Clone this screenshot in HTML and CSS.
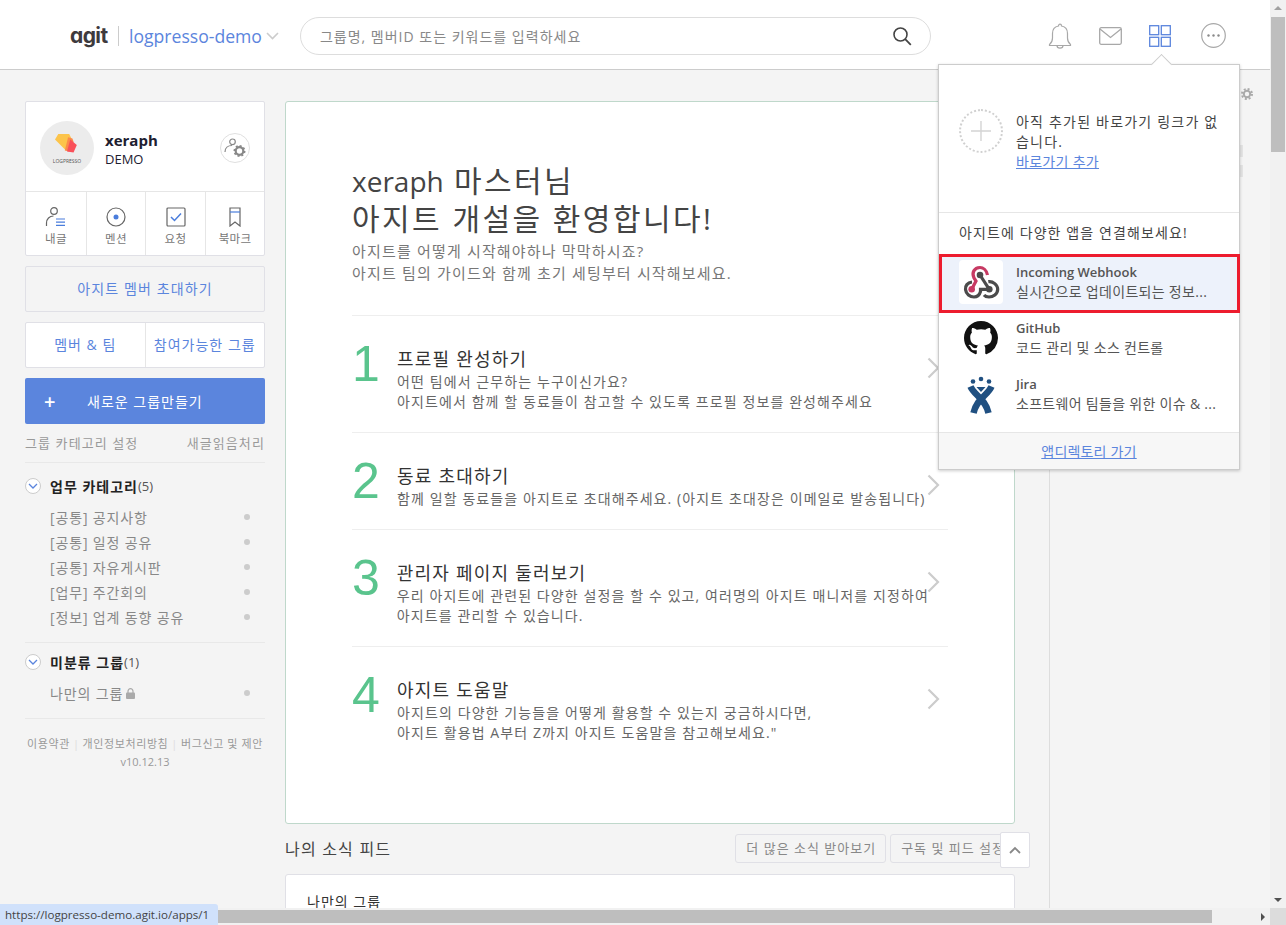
FILE: index.html
```html
<!DOCTYPE html>
<html lang="ko">
<head>
  <meta charset="UTF-8">
  <title>agit - logpresso-demo</title>
  <link rel="stylesheet" href="styles.css">
</head>
<body>
  <div class="app">
    <header class="top-bar">
      <div class="brand">agit</div>
      <div class="brand-sep"></div>
      <a class="site-name">logpresso-demo</a>
      <svg class="site-caret" width="13" height="8" viewBox="0 0 13 8"><path d="M1 1l5.500 5.500L12 1" fill="none" stroke="#ccc" stroke-width="1.600"/></svg>
      <div class="search-box">
        <span>그룹명, 멤버ID 또는 키워드를 입력하세요</span>
        <svg width="20" height="20" viewBox="0 0 20 20"><circle cx="8.500" cy="8.500" r="6.500" fill="none" stroke="#444" stroke-width="1.600"/><path d="M13.200 13.200l5.600 5.600" stroke="#444" stroke-width="1.800"/></svg>
      </div>
      <nav class="top-icons">
        <svg width="24" height="26" viewBox="0 0 24 26"><path d="M1.500 21.500c2.500-2 3-3.500 3-6.500V10.500C4.500 6 7.500 3.500 10.500 3c0-2.500 3-2.500 3 0 3 .5 6 3 6 7.500V15c0 3 .5 4.500 3 6.500v1h-21zM9 22.500c0 3.500 6 3.500 6 0" fill="none" stroke="#a8a8a8" stroke-width="1.200"/></svg>
        <svg width="23" height="18" viewBox="0 0 23 18"><rect x=".7" y=".7" width="21.600" height="16.600" rx="1.500" fill="none" stroke="#a8a8a8" stroke-width="1.300"/><path d="M1 2l10.500 8.500L22 2" fill="none" stroke="#a8a8a8" stroke-width="1.300"/></svg>
        <svg width="22" height="22" viewBox="0 0 22 22"><g fill="none" stroke="#5b85dd" stroke-width="1.300"><rect x=".7" y=".7" width="9" height="9"/><rect x="12.300" y=".7" width="9" height="9"/><rect x=".7" y="12.300" width="9" height="9"/><rect x="12.300" y="12.300" width="9" height="9"/></g></svg>
        <svg class="more-icon" width="25" height="25" viewBox="0 0 25 25"><circle cx="12.500" cy="12.500" r="11.800" fill="none" stroke="#a8a8a8" stroke-width="1.200"/><circle cx="7.500" cy="12.500" r="1.200" fill="#8a8a8a"/><circle cx="12.500" cy="12.500" r="1.200" fill="#8a8a8a"/><circle cx="17.500" cy="12.500" r="1.200" fill="#8a8a8a"/></svg>
      </nav>
    </header>

    <div class="page">
      <aside class="side">
        <section class="profile-card">
          <div class="profile-top">
            <div class="avatar">
              <svg width="24" height="23" viewBox="0 0 22 21"><path d="M0 5l3-5h10l3 6-6 9z" fill="#fcc44b"/><path d="M9 15l3-12 4 1 1 3-4 9z" fill="#fb8a4b"/><path d="M11 16l3-11 6 5-3 7z" fill="#f9505a"/></svg>
              <span>LOGPRESSO</span>
            </div>
            <div class="profile-name">
              <strong>xeraph</strong>
              <span>DEMO</span>
            </div>
            <div class="profile-gear">
              <svg width="22" height="20" viewBox="0 0 22 20"><circle cx="8.500" cy="3.800" r="2.800" fill="none" stroke="#888" stroke-width="1.200"/><path d="M1 14c0-4 3-6.500 7-6.500" fill="none" stroke="#888" stroke-width="1.200"/><circle cx="15.500" cy="13" r="3.800" fill="none" stroke="#888" stroke-width="2.200"/><circle cx="15.500" cy="13" r="5.200" fill="none" stroke="#888" stroke-width="1.600" stroke-dasharray="2 2"/></svg>
            </div>
          </div>
          <div class="profile-nav">
            <a>
              <svg width="22" height="20" viewBox="0 0 22 20"><circle cx="9" cy="4" r="3.300" fill="none" stroke="#666" stroke-width="1.200"/><path d="M1.500 19v-3c0-4 3-7 7-7" fill="none" stroke="#666" stroke-width="1.200"/><path d="M11 12h9M11 15.200h9M11 18.400h9" stroke="#4a7ddc" stroke-width="1.200"/></svg>
              <span>내글</span>
            </a>
            <a>
              <svg width="20" height="20" viewBox="0 0 20 20"><circle cx="10" cy="10" r="9" fill="none" stroke="#666" stroke-width="1.200"/><circle cx="10" cy="10" r="2.500" fill="#4a7ddc"/></svg>
              <span>멘션</span>
            </a>
            <a>
              <svg width="20" height="20" viewBox="0 0 20 20"><rect x="1" y="1" width="18" height="18" rx="1" fill="none" stroke="#666" stroke-width="1.200"/><path d="M5 10l3.500 3.500L15 6.500" fill="none" stroke="#4a7ddc" stroke-width="1.500"/></svg>
              <span>요청</span>
            </a>
            <a>
              <svg width="12" height="20" viewBox="0 0 12 20"><path d="M1 1h10v18l-5-4-5 4z" fill="none" stroke="#666" stroke-width="1.200"/><path d="M1 5h10" stroke="#4a7ddc" stroke-width="1.200"/></svg>
              <span>북마크</span>
            </a>
          </div>
        </section>

        <a class="invite-btn">아지트 멤버 초대하기</a>

        <div class="member-tabs">
          <a>멤버 &amp; 팀</a>
          <a>참여가능한 그룹</a>
        </div>

        <a class="new-group"><b>+</b><span>새로운 그룹만들기</span></a>

        <div class="side-links">
          <a>그룹 카테고리 설정</a>
          <a>새글읽음처리</a>
        </div>

        <section class="cat">
          <h4><i class="cat-toggle"><svg width="10" height="6" viewBox="0 0 10 6"><path d="M1 1l4 4 4-4" fill="none" stroke="#5b85dd" stroke-width="1.300"/></svg></i>업무 카테고리<em>(5)</em></h4>
          <ul>
            <li>[공통] 공지사항</li>
            <li>[공통] 일정 공유</li>
            <li>[공통] 자유게시판</li>
            <li>[업무] 주간회의</li>
            <li>[정보] 업계 동향 공유</li>
          </ul>
        </section>
        <section class="cat cat-next">
          <h4><i class="cat-toggle"><svg width="10" height="6" viewBox="0 0 10 6"><path d="M1 1l4 4 4-4" fill="none" stroke="#5b85dd" stroke-width="1.300"/></svg></i>미분류 그룹<em>(1)</em></h4>
          <ul>
            <li><span>나만의 그룹<svg class="lock" width="9" height="11" viewBox="0 0 9 11"><path d="M2 5V3.200a2.500 2.500 0 015 0V5" fill="none" stroke="#aaa" stroke-width="1.200"/><rect y="4.500" width="9" height="6.500" rx="1" fill="#aaa"/></svg></span></li>
          </ul>
        </section>

        <footer class="side-foot">
          <div class="foot-links"><a>이용약관</a><i>|</i><a>개인정보처리방침</a><i>|</i><a>버그신고 및 제안</a></div>
          <div>v10.12.13</div>
        </footer>
      </aside>

      <main class="main">
        <section class="welcome">
          <h1><span class="latin">xeraph</span> 마스터님<br>아지트 개설을 환영합니다!</h1>
          <p class="lead">아지트를 어떻게 시작해야하나 막막하시죠?<br>아지트 팀의 가이드와 함께 초기 세팅부터 시작해보세요.</p>
          <div class="steps">
            <div class="step">
              <div class="step-no">1</div>
              <div class="step-body">
                <h3>프로필 완성하기</h3>
                <p>어떤 팀에서 근무하는 누구이신가요?<br>아지트에서 함께 할 동료들이 참고할 수 있도록 프로필 정보를 완성해주세요</p>
              </div>
              <svg class="step-arrow" width="13" height="22" viewBox="0 0 13 22"><path d="M1.500 1.500L11 11l-9.500 9.500" fill="none" stroke="#ccc" stroke-width="2.200"/></svg>
            </div>
            <div class="step">
              <div class="step-no">2</div>
              <div class="step-body">
                <h3>동료 초대하기</h3>
                <p>함께 일할 동료들을 아지트로 초대해주세요. (아지트 초대장은 이메일로 발송됩니다)</p>
              </div>
              <svg class="step-arrow" width="13" height="22" viewBox="0 0 13 22"><path d="M1.500 1.500L11 11l-9.500 9.500" fill="none" stroke="#ccc" stroke-width="2.200"/></svg>
            </div>
            <div class="step">
              <div class="step-no">3</div>
              <div class="step-body">
                <h3>관리자 페이지 둘러보기</h3>
                <p>우리 아지트에 관련된 다양한 설정을 할 수 있고, 여러명의 아지트 매니저를 지정하여<br>아지트를 관리할 수 있습니다.</p>
              </div>
              <svg class="step-arrow" width="13" height="22" viewBox="0 0 13 22"><path d="M1.500 1.500L11 11l-9.500 9.500" fill="none" stroke="#ccc" stroke-width="2.200"/></svg>
            </div>
            <div class="step">
              <div class="step-no">4</div>
              <div class="step-body">
                <h3>아지트 도움말</h3>
                <p>아지트의 다양한 기능들을 어떻게 활용할 수 있는지 궁금하시다면,<br>아지트 활용법 A부터 Z까지 아지트 도움말을 참고해보세요."</p>
              </div>
              <svg class="step-arrow" width="13" height="22" viewBox="0 0 13 22"><path d="M1.500 1.500L11 11l-9.500 9.500" fill="none" stroke="#ccc" stroke-width="2.200"/></svg>
            </div>
          </div>
        </section>

        <div class="feed-head">
          <h2>나의 소식 피드</h2>
          <a>더 많은 소식 받아보기</a>
          <a>구독 및 피드 설정</a>
        </div>
        <section class="feed-card">나만의 그룹</section>
        <a class="to-top"><svg width="12" height="8" viewBox="0 0 12 8"><path d="M1 7l5-5 5 5" fill="none" stroke="#888" stroke-width="1.800"/></svg></a>
      </main>

      <div class="right-col">
        <svg class="right-gear" width="12" height="12" viewBox="0 0 12 12"><circle cx="6" cy="6" r="3.200" fill="none" stroke="#aaa" stroke-width="2"/><circle cx="6" cy="6" r="5" fill="none" stroke="#aaa" stroke-width="2" stroke-dasharray="2 1.930"/></svg>
        <div class="right-peek"></div>
        <div class="right-peek"></div>
      </div>
    </div>

    <!-- 바로가기 메뉴 -->
    <div class="app-menu">
      <div class="menu-arrow"></div>
      <div class="menu-empty">
        <div class="plus-circle"><svg width="22" height="22" viewBox="0 0 22 22"><path d="M11 1v20M1 11h20" stroke="#d4d4d4" stroke-width="1.400"/></svg></div>
        <div class="menu-empty-text">아직 추가된 바로가기 링크가 없습니다.<br><a>바로가기 추가</a></div>
      </div>
      <div class="menu-title">아지트에 다양한 앱을 연결해보세요!</div>
      <a class="menu-row is-active">
        <span class="menu-logo">
          <svg width="44" height="44" viewBox="0 0 44 44"><g fill="none" stroke-width="3.200"><path d="M28.500 15C27.500 10 24 7.500 21 7.500 15 7.500 12.500 13 15 18l2 3-4.300 8.300" stroke="#c73a63"/><path d="M21 15l9.300 14.300" stroke="#4b4b4b"/><path d="M13 22c-4.500.5-7 4-6.500 7.500C7 34 11 37 15 37c3 0 5.500-2 6.500-5.500v-2.200h8.800" stroke="#4b4b4b"/><path d="M29.300 21.700c4.700-.7 9.400 3.300 9.400 7.600 0 4.700-4.700 7.700-8.700 7.700-2 0-4-.7-5-2" stroke="#4b4b4b"/></g><circle cx="21" cy="15" r="3.300" fill="#4b4b4b"/><circle cx="12.700" cy="29.300" r="3.300" fill="#c73a63"/><circle cx="30.300" cy="29.300" r="3.300" fill="#4b4b4b"/></svg>
        </span>
        <span class="menu-text"><b>Incoming Webhook</b><small>실시간으로 업데이트되는 정보...</small></span>
      </a>
      <a class="menu-row">
        <span class="menu-logo">
          <svg width="34" height="34" viewBox="0 0 16 16"><path fill="#111" d="M8 0C3.580 0 0 3.580 0 8c0 3.540 2.290 6.530 5.470 7.590.4.070.55-.17.55-.38 0-.19-.01-.82-.01-1.490-2.010.37-2.530-.49-2.690-.94-.09-.23-.48-.94-.82-1.130-.28-.15-.68-.52-.01-.53.63-.01 1.080.58 1.230.82.72 1.210 1.870.87 2.330.66.07-.52.28-.87.51-1.070-1.780-.2-3.640-.89-3.640-3.950 0-.87.31-1.590.82-2.150-.08-.2-.36-1.020.08-2.120 0 0 .67-.21 2.200.82.64-.18 1.320-.27 2-.27.68 0 1.360.09 2 .27 1.530-1.040 2.200-.82 2.200-.82.44 1.100.16 1.920.08 2.120.51.56.82 1.270.82 2.150 0 3.070-1.870 3.750-3.650 3.950.29.25.54.73.54 1.480 0 1.070-.01 1.930-.01 2.200 0 .21.15.46.55.38A8.013 8.013 0 0016 8c0-4.420-3.580-8-8-8z"/></svg>
        </span>
        <span class="menu-text"><b>GitHub</b><small>코드 관리 및 소스 컨트롤</small></span>
      </a>
      <a class="menu-row">
        <span class="menu-logo">
          <svg width="44" height="44" viewBox="0 0 44 44"><g fill="#205081"><circle cx="14" cy="9.500" r="2.300"/><circle cx="22" cy="7" r="2.300"/><circle cx="30" cy="9.500" r="2.300"/><path d="M17.500 15h9L22 20z"/></g><g fill="none" stroke="#205081" stroke-width="6.500"><path d="M11.500 14.500C15 23 26.500 27 29.500 41"/><path d="M32.500 14.500C29 23 17.500 27 14.500 41"/></g></svg>
        </span>
        <span class="menu-text"><b>Jira</b><small>소프트웨어 팀들을 위한 이슈 &amp; ...</small></span>
      </a>
      <div class="menu-foot"><a>앱디렉토리 가기</a></div>
    </div>

    <!-- 브라우저 스크롤바, 상태표시줄 -->
    <div class="scroll-v">
      <i class="arrow-up"></i>
      <div class="scroll-v-thumb"></div>
      <i class="arrow-down"></i>
    </div>
    <div class="scroll-h">
      <div class="scroll-h-thumb"></div>
      <i class="arrow-right"></i>
    </div>
    <div class="scroll-corner"></div>
    <div class="status-tip">https://logpresso-demo.agit.io/apps/1</div>
  </div>
</body>
</html>
```

FILE: styles.css
```css
* {
  box-sizing: border-box;
}

html,
body {
  margin: 0;
  padding: 0;
  height: 100%;
  overflow: hidden;
}

body {
  font-family: "Open Sans", "Noto Sans CJK KR", sans-serif;
  font-size: 14px;
  color: #444;
  background-color: #f4f4f4;
}

a {
  color: inherit;
  text-decoration: none;
}

h1,
h2,
h3,
h4,
p,
ul {
  margin: 0;
  padding: 0;
  font-weight: normal;
}

.app {
  position: relative;
  width: 1286px;
  height: 925px;
  overflow: hidden;
}

/* top bar */
.top-bar {
  display: flex;
  align-items: center;
  height: 70px;
  width: 1270px;
  padding: 2px 0 0 70px;
  background-color: #fff;
  border-bottom: 1px solid #ccc;
}

.brand {
  width: 40px;
  font-family: "Inter", sans-serif;
  font-feature-settings: "cv11";
  font-size: 21px;
  font-weight: 700;
  letter-spacing: -0.6px;
  color: #3e3a3d;
}

.brand-sep {
  width: 1px;
  height: 20px;
  margin: 0 10px 0 8px;
  background-color: #ccc;
}

.site-name {
  font-size: 17.600px;
  color: #5b85dd;
}

.site-caret {
  margin: 0 0 0 4px;
}

.search-box {
  display: flex;
  align-items: center;
  justify-content: space-between;
  width: 631px;
  height: 38px;
  margin-left: 21px;
  padding: 0 18px 0 19px;
  color: #888;
  letter-spacing: 1px;
  border: 1px solid #ddd;
  border-radius: 19px;
}

.top-icons {
  display: flex;
  align-items: center;
  gap: 27px;
  margin-left: 117px;
}

.more-icon {
  margin-left: 3px;
}

/* page columns */
.page {
  display: flex;
  height: 855px;
  padding: 31px 0 0 25px;
}

.side {
  width: 240px;
  flex-shrink: 0;
}

.main {
  position: relative;
  width: 730px;
  margin-left: 20px;
  flex-shrink: 0;
}

.right-col {
  position: relative;
  width: 221px;
  margin: -31px 0 0 34px;
  border-left: 1px solid #ddd;
}

.right-gear {
  position: absolute;
  top: 18px;
  left: 191px;
}

.right-peek {
  width: 3px;
  height: 12px;
  margin: 0 0 8px 190px;
  background-color: #e4e4e4;
  position: relative;
  top: 75px;
}

/* sidebar */
.profile-card {
  height: 155px;
  background-color: #fff;
  border: 1px solid #e0e0e6;
  border-radius: 2px;
}

.profile-top {
  display: flex;
  align-items: center;
  height: 90px;
  padding: 3px 14px 0;
  border-bottom: 1px solid #e6e6e6;
}

.avatar {
  display: flex;
  flex-direction: column;
  align-items: center;
  justify-content: center;
  width: 54px;
  height: 54px;
  padding-top: 2px;
  background-color: #ececec;
  border-radius: 50%;
}

.avatar span {
  font-size: 5px;
  line-height: 8px;
  color: #555;
}

.profile-name {
  display: flex;
  flex-direction: column;
  margin: 3px 0 0 11px;
  flex-grow: 1;
  color: #1e2030;
}

.profile-name strong {
  font-size: 15px;
  line-height: 19px;
}

.profile-name span {
  font-size: 13px;
  line-height: 18px;
}

.profile-gear {
  display: flex;
  align-items: center;
  justify-content: center;
  width: 30px;
  height: 30px;
  border: 1px solid #e0e0e0;
  border-radius: 50%;
}

.profile-nav {
  display: grid;
  grid-template-columns: 60px 59px 60px 59px;
  height: 63px;
}

.profile-nav a {
  display: flex;
  flex-direction: column;
  align-items: center;
  padding-top: 15px;
  font-size: 11.500px;
  line-height: 16px;
  letter-spacing: 0.3px;
  color: #777;
  border-left: 1px solid #e6e6e6;
}

.profile-nav a:first-child {
  border-left: 0;
}

.profile-nav span {
  margin-top: 4px;
}

.invite-btn {
  display: block;
  height: 46px;
  margin-top: 10px;
  line-height: 44px;
  text-align: center;
  letter-spacing: 1.100px;
  color: #5b85dd;
  border: 1px solid #e0e0e6;
  border-radius: 2px;
}

.member-tabs {
  display: flex;
  height: 46px;
  margin-top: 10px;
  background-color: #fff;
  border: 1px solid #e0e0e6;
  border-radius: 2px;
}

.member-tabs a {
  flex: 1;
  line-height: 44px;
  text-align: center;
  letter-spacing: 1px;
  color: #5b85dd;
}

.member-tabs a + a {
  border-left: 1px solid #e6e6e6;
}

.new-group {
  display: flex;
  align-items: center;
  height: 46px;
  margin-top: 10px;
  padding-left: 19px;
  color: #fff;
  letter-spacing: 1px;
  background-color: #5b85dd;
  border-radius: 2px;
}

.new-group b {
  width: 43px;
  font-size: 20px;
  font-weight: 600;
}

.side-links {
  display: flex;
  justify-content: space-between;
  height: 39px;
  padding-top: 9px;
  line-height: 20px;
  font-size: 13px;
  letter-spacing: 1.100px;
  color: #999;
  border-bottom: 1px solid #e8e8e8;
}

.cat {
  padding-top: 11px;
  border-bottom: 1px solid #e8e8e8;
}

.cat-next {
  padding-top: 7px;
}

.cat h4 {
  display: flex;
  align-items: center;
  height: 24px;
  font-size: 14px;
  font-weight: 700;
  letter-spacing: 1px;
  color: #222;
}

.cat h4 em {
  font-style: normal;
  font-weight: normal;
  font-size: 13px;
  letter-spacing: 0;
  color: #555;
}

.cat-toggle {
  display: flex;
  align-items: center;
  justify-content: center;
  width: 16px;
  height: 16px;
  margin-right: 9px;
  background-color: #fff;
  border: 1px solid #ccc;
  border-radius: 50%;
}

.cat ul {
  list-style: none;
  padding: 7px 0 12px;
}

.cat li {
  position: relative;
  height: 25px;
  padding-left: 25px;
  line-height: 25px;
  letter-spacing: 0.850px;
  color: #888;
}

.cat li::after {
  content: "";
  position: absolute;
  top: 9px;
  right: 15px;
  width: 6px;
  height: 6px;
  background-color: #ccc;
  border-radius: 50%;
}

.lock {
  margin-left: 3px;
}

.side-foot {
  padding-top: 16px;
  font-size: 11px;
  line-height: 18px;
  text-align: center;
  color: #999;
}

.foot-links {
  letter-spacing: 0.600px;
  white-space: nowrap;
}

.side-foot i {
  margin: 0 3px;
  font-style: normal;
  color: #ddd;
}

/* welcome card */
.welcome {
  height: 723px;
  padding: 60px 66px 0;
  background-color: #fff;
  border: 1px solid #bfd8cb;
  border-radius: 3px;
}

.welcome h1 {
  font-size: 30px;
  line-height: 38px;
  letter-spacing: 2.450px;
  color: #444;
}

.latin {
  font-size: 28px;
  letter-spacing: 0;
}

.lead {
  margin-top: 2px;
  line-height: 22px;
  font-size: 15px;
  letter-spacing: 1.170px;
  color: #777;
}

.steps {
  margin-top: 31px;
}

.step {
  display: flex;
  padding: 21px 0 20px;
  border-top: 1px solid #eee;
}

.step-no {
  width: 45px;
  padding-top: 1px;
  font-family: "Liberation Sans", sans-serif;
  font-size: 50px;
  line-height: 52px;
  color: #5ac48d;
}

.step-body {
  flex-grow: 1;
  min-width: 0;
  padding-top: 9px;
}

.step-body h3 {
  font-size: 18px;
  line-height: 26px;
  letter-spacing: 1.200px;
  color: #333;
}

.step-body p {
  line-height: 20px;
  font-size: 14px;
  letter-spacing: 1.100px;
  white-space: nowrap;
  color: #666;
}

.step-arrow {
  align-self: flex-start;
  margin: 20px 8px 0 0;
  flex-shrink: 0;
}

/* feed */
.feed-head {
  display: flex;
  align-items: center;
  height: 29px;
  margin-top: 10px;
  gap: 4px;
}

.feed-head h2 {
  flex-grow: 1;
  padding-bottom: 2px;
  font-size: 16px;
  letter-spacing: 1.200px;
  color: #444;
}

.feed-head a {
  height: 29px;
  padding: 0 9px 0 10px;
  line-height: 27px;
  font-size: 13px;
  letter-spacing: 1px;
  color: #888;
  border: 1px solid #e0e0e6;
  border-radius: 3px;
  white-space: nowrap;
}

.feed-card {
  height: 80px;
  margin-top: 11px;
  padding: 17px 21px;
  line-height: 20px;
  letter-spacing: 1px;
  color: #333;
  background-color: #fff;
  border: 1px solid #e0e0e6;
  border-radius: 3px;
}

.to-top {
  position: absolute;
  top: 731px;
  left: 715px;
  display: flex;
  align-items: center;
  justify-content: center;
  width: 30px;
  height: 36px;
  background-color: #fff;
  border: 1px solid #e0e0e6;
  border-radius: 2px;
}

/* shortcut menu */
.app-menu {
  position: absolute;
  top: 64px;
  left: 938px;
  width: 302px;
  height: 406px;
  background-color: #fff;
  border: 1px solid #ccc;
  box-shadow: 0 1px 3px rgba(0, 0, 0, 0.2);
}

.menu-arrow {
  position: absolute;
  top: -8px;
  left: 215px;
  width: 15px;
  height: 15px;
  background-color: #fff;
  border-top: 1px solid #ccc;
  border-left: 1px solid #ccc;
  transform: rotate(45deg);
}

.menu-empty {
  position: relative;
  display: flex;
  height: 148px;
  padding: 47px 20px 0;
  border-bottom: 1px solid #e6e6e6;
}

.plus-circle {
  display: flex;
  align-items: center;
  justify-content: center;
  width: 44px;
  height: 44px;
  margin-top: -3px;
  flex-shrink: 0;
  border: 2px dotted #d0d0d0;
  border-radius: 50%;
}

.menu-empty-text {
  margin-left: 13px;
  line-height: 20px;
  font-size: 14px;
  letter-spacing: 1.200px;
  word-break: break-all;
  color: #444;
}

.menu-empty-text a {
  letter-spacing: 0.300px;
}

.menu-empty-text a,
.menu-foot a {
  color: #5b85dd;
  text-decoration: underline;
}

.menu-title {
  height: 41px;
  padding: 10px 20px 0;
  line-height: 20px;
  font-size: 14px;
  letter-spacing: 1.100px;
  color: #444;
}

.menu-row {
  display: flex;
  align-items: center;
  height: 56px;
  padding: 0 0 4px 20px;
}

.menu-row.is-active {
  height: 59px;
  margin: 0 -1px -1px 0;
  padding: 0 0 3px 17px;
  background-color: #edf2fb;
  border: 3px solid #ed1c2e;
}

.menu-logo {
  display: flex;
  align-items: center;
  justify-content: center;
  width: 44px;
  height: 44px;
  flex-shrink: 0;
  border-radius: 4px;
}

.is-active .menu-logo {
  background-color: #fff;
}

.menu-text {
  display: flex;
  flex-direction: column;
  margin-left: 13px;
  line-height: 19px;
  font-size: 13px;
}

.menu-text b {
  font-weight: 600;
  color: #555;
}

.menu-text small {
  font-size: 14px;
  letter-spacing: 0.300px;
  color: #555;
}

.menu-foot {
  position: absolute;
  left: 0;
  right: 0;
  bottom: 0;
  height: 37px;
  line-height: 37px;
  text-align: center;
  font-size: 14px;
  letter-spacing: 0.200px;
  background-color: #f7f7f7;
  border-top: 1px solid #e6e6e6;
}

/* browser chrome */
.scroll-v {
  position: absolute;
  top: 0;
  right: 0;
  width: 16px;
  height: 908px;
  background-color: #f1f1f1;
}

.scroll-v-thumb {
  position: absolute;
  top: 17px;
  left: 1px;
  width: 14px;
  height: 135px;
  background-color: #bebebe;
}

.scroll-h {
  position: absolute;
  left: 0;
  bottom: 0;
  width: 1270px;
  height: 17px;
  background-color: #f1f1f1;
}

.scroll-h-thumb {
  position: absolute;
  top: 2px;
  left: 0;
  width: 1212px;
  height: 13px;
  background-color: #bebebe;
}

.scroll-corner {
  position: absolute;
  right: 0;
  bottom: 0;
  width: 16px;
  height: 17px;
  background-color: #dcdcdc;
}

.arrow-up,
.arrow-down,
.arrow-right {
  position: absolute;
  width: 0;
  height: 0;
  border-style: solid;
  border-color: transparent;
}

.arrow-up {
  top: 6px;
  left: 4px;
  border-width: 0 4px 4px;
  border-bottom-color: #a0a0a0;
}

.arrow-down {
  bottom: 6px;
  left: 4px;
  border-width: 4px 4px 0;
  border-top-color: #505050;
}

.arrow-right {
  top: 5px;
  right: 5px;
  border-width: 4px 0 4px 4px;
  border-left-color: #505050;
}

.status-tip {
  position: absolute;
  left: 0;
  bottom: 0;
  width: 218px;
  height: 21px;
  padding-left: 5px;
  line-height: 21px;
  font-size: 11.600px;
  color: #444;
  background-color: #d0e1fb;
  border-top-right-radius: 3px;
}
```
